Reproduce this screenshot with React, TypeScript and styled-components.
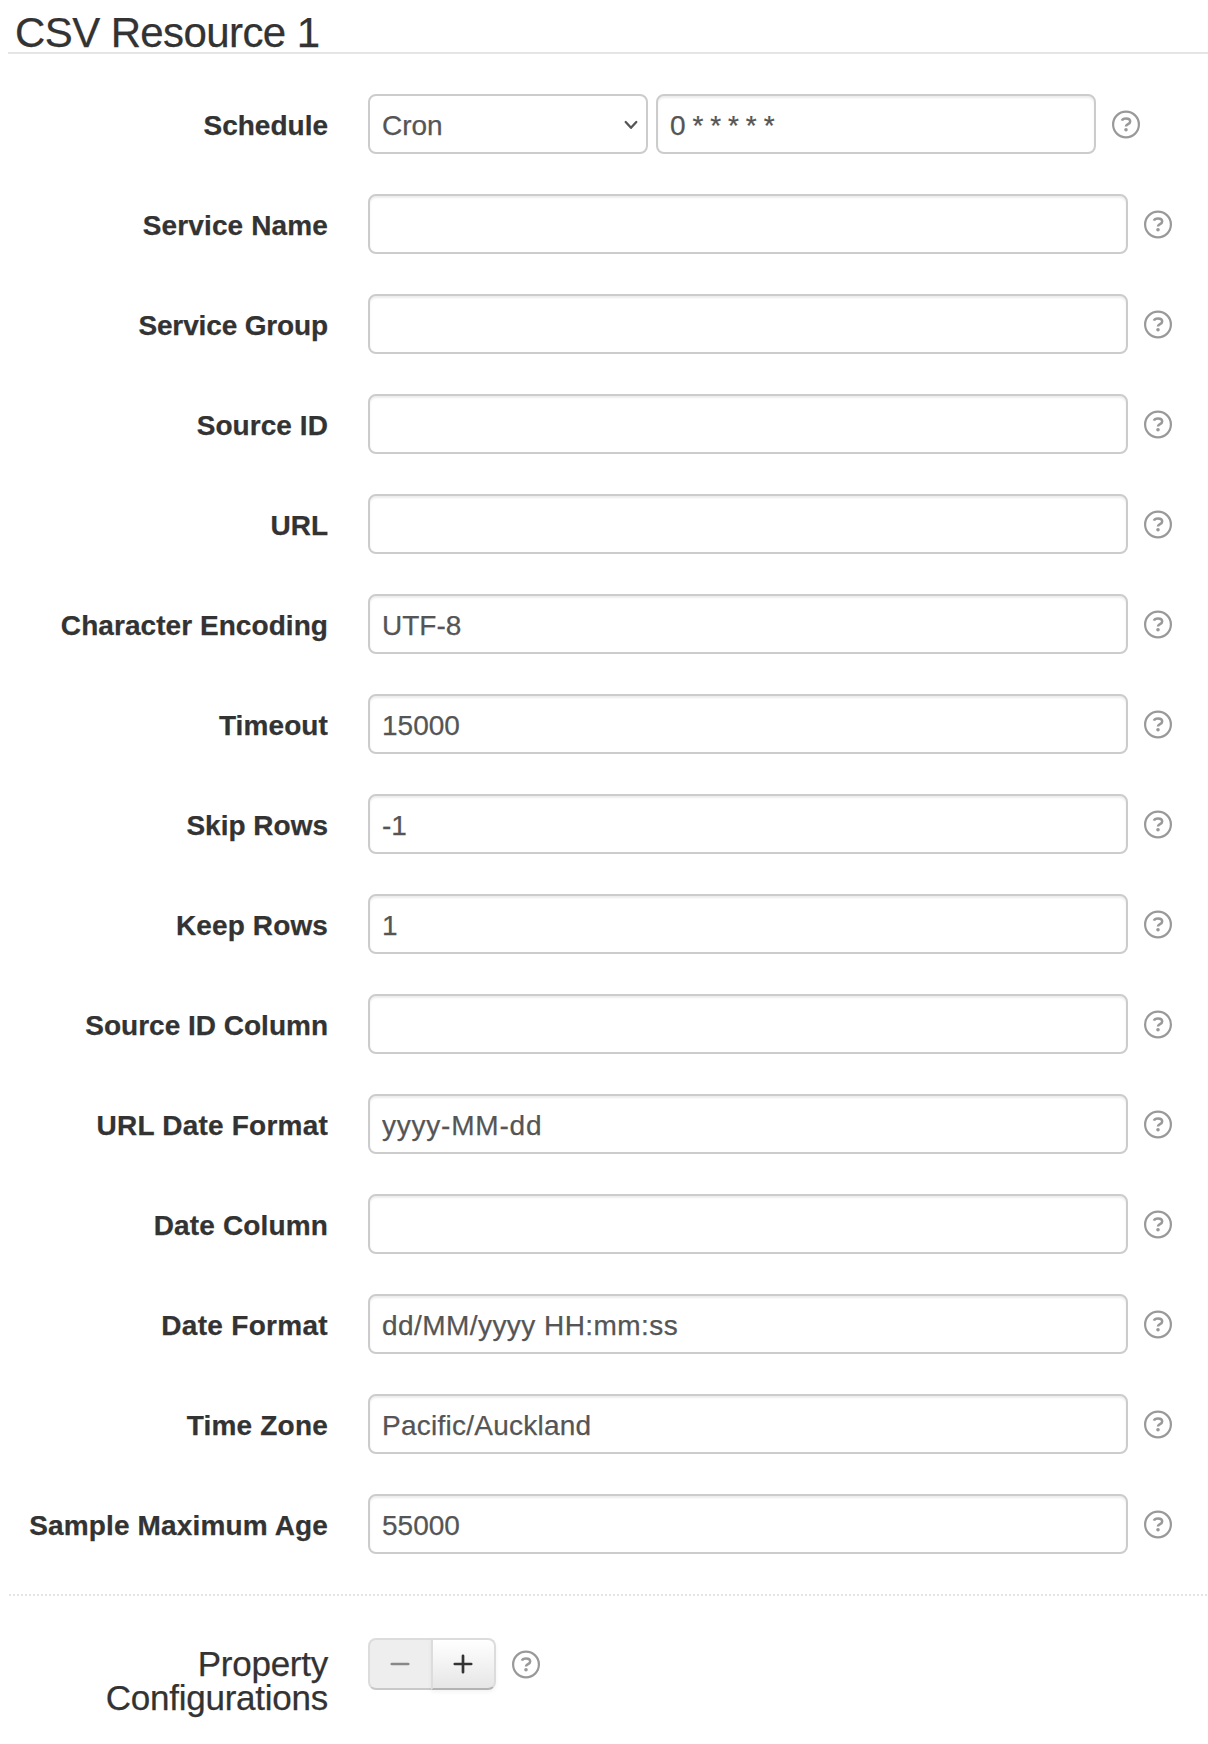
import React from "react";
import styled, { createGlobalStyle } from "styled-components";

const GlobalStyle = createGlobalStyle`
  *, *::before, *::after { box-sizing: border-box; }
  body {
    margin: 0;
    background: #fff;
    color: #333;
    font-family: "Liberation Sans", Arial, sans-serif;
    font-size: 28px;
    overflow: hidden;
    -webkit-text-stroke: 0.25px currentColor;
  }
`;

const Page = styled.main`
  height: 1744px;
  padding-left: 8px;
  overflow: hidden;
`;

const Legend = styled.h1`
  margin: 0 0 40px;
  height: 54px;
  padding: 9px 0 0 7px;
  border-bottom: 2px solid #e5e5e5;
  font-size: 42px;
  line-height: 48px;
  font-weight: 400;
  letter-spacing: -0.6px;
`;

const Rows = styled.div`
  display: flex;
  flex-direction: column;
  gap: 40px;
`;

const Row = styled.div`
  display: flex;
  align-items: center;
  height: 60px;
`;

const Label = styled.label<{ $track?: number }>`
  width: 320px;
  margin-right: 40px;
  flex: none;
  text-align: right;
  font-weight: 700;
  line-height: 40px;
  padding-top: 4px;
  white-space: nowrap;
  letter-spacing: ${(p) => p.$track ?? 0}px;
`;

const Input = styled.input<{ $width: number; $track?: number }>`
  width: ${(p) => p.$width}px;
  height: 60px;
  margin: 0;
  padding: 11px 12px 7px;
  border: 2px solid #ccc;
  border-radius: 8px;
  background: #fff;
  box-shadow: inset 0 2px 2px rgba(0, 0, 0, 0.075);
  color: #555;
  font: 28px/38px "Liberation Sans", Arial, sans-serif;
  letter-spacing: ${(p) => p.$track ?? 0}px;
  outline: none;
`;

const Select = styled.div`
  display: flex;
  align-items: center;
  justify-content: space-between;
  width: 280px;
  height: 60px;
  margin-right: 8px;
  padding: 4px 7px 0 12px;
  border: 2px solid #ccc;
  border-radius: 8px;
  color: #555;
  line-height: 40px;
`;

const Chevron = styled.svg`
  width: 16px;
  height: 12px;
  margin-bottom: 2px;
`;

const HelpIcon = styled.svg`
  flex: none;
  width: 28px;
  height: 29px;
  margin: 1px 0 0 15.5px;
`;

const Divider = styled.div`
  height: 2px;
  margin: 40px 0 42px 1px;
  background: repeating-linear-gradient(90deg, #e5e5e5 0 2px, transparent 2px 4px);
`;

const PropertyRow = styled.div`
  display: flex;
  align-items: flex-start;
`;

const PropertyTitle = styled.h2`
  width: 320px;
  margin: 9px 40px 0 0;
  text-align: right;
  font-size: 35px;
  line-height: 34px;
  font-weight: 400;
  letter-spacing: -0.25px;
`;

const Controls = styled.div`
  display: flex;
  align-items: center;
  height: 52px;
`;

const StepButton = styled.button<{ $side: "left" | "right" }>`
  display: flex;
  align-items: center;
  justify-content: center;
  width: 65px;
  height: 52px;
  margin: 0 0 0 ${(p) => (p.$side === "left" ? 0 : -2)}px;
  padding: 0 2px 0 0;
  border: 2px solid;
  border-color: ${(p) => (p.$side === "left" ? "#dcdcdc #dcdcdc #c9c9c9" : "#dcdcdc #dcdcdc #b3b3b3")};
  border-radius: ${(p) => (p.$side === "left" ? "8px 0 0 8px" : "0 8px 8px 0")};
  background: ${(p) => (p.$side === "left" ? "#eee" : "linear-gradient(#fff, #e6e6e6)")};
  box-shadow: ${(p) => (p.$side === "left" ? "none" : "0 2px 4px rgba(0, 0, 0, 0.05)")};
  color: ${(p) => (p.$side === "left" ? "#888" : "#333")};
`;

const Help = () => (
  <HelpIcon viewBox="0 0 28 29" fill="none">
    <circle cx="14" cy="14.5" r="12.9" stroke="#999" strokeWidth="2.2" />
    <path d="M9.9 10.7C10.5 8.9 12 8.4 14 8.4c2.5 0 4.2 1.1 4.2 3 0 1.6-1.2 2.2-2.4 2.9-1.1.6-1.8.9-1.8 2.1" stroke="#999" strokeWidth="2.5" />
    <circle cx="14" cy="19.8" r="1.8" fill="#999" />
  </HelpIcon>
);

type Field = { label: string; value: string; track?: number; valueTrack?: number };

const fields: Field[] = [
  { label: "Service Name", value: "", track: 0.13 },
  { label: "Service Group", value: "", track: -0.14 },
  { label: "Source ID", value: "", track: 0.07 },
  { label: "URL", value: "" },
  { label: "Character Encoding", value: "UTF-8", track: 0.06 },
  { label: "Timeout", value: "15000", track: 0.1 },
  { label: "Skip Rows", value: "-1" },
  { label: "Keep Rows", value: "1", track: 0.12 },
  { label: "Source ID Column", value: "" },
  { label: "URL Date Format", value: "yyyy-MM-dd", track: 0.22, valueTrack: 0.78 },
  { label: "Date Column", value: "", track: 0.15 },
  { label: "Date Format", value: "dd/MM/yyyy HH:mm:ss", track: 0.3, valueTrack: 0.44 },
  { label: "Time Zone", value: "Pacific/Auckland", track: 0.2, valueTrack: 0.25 },
  { label: "Sample Maximum Age", value: "55000", track: 0.15 },
];

export default function App() {
  return (
    <Page>
      <GlobalStyle />
      <Legend>CSV Resource 1</Legend>
      <Rows>
        <Row>
          <Label>Schedule</Label>
          <Select>
            Cron
            <Chevron viewBox="0 0 16 12" fill="none">
              <path d="M2.7 3l5.3 5.8L13.3 3" stroke="#555" strokeWidth="2.3" strokeLinecap="round" strokeLinejoin="round" />
            </Chevron>
          </Select>
          <Input $width={440} $track={-0.44} defaultValue="0 * * * * *" />
          <Help />
        </Row>
        {fields.map((f) => (
          <Row key={f.label}>
            <Label $track={f.track}>{f.label}</Label>
            <Input $width={760} $track={f.valueTrack} defaultValue={f.value} />
            <Help />
          </Row>
        ))}
      </Rows>
      <Divider />
      <PropertyRow>
        <PropertyTitle>Property Configurations</PropertyTitle>
        <Controls>
          <StepButton $side="left" disabled>
            <svg width="20" height="20" viewBox="0 0 20 20">
              <path d="M1.8 10h16.4" stroke="currentColor" strokeWidth="2.7" strokeLinecap="round" />
            </svg>
          </StepButton>
          <StepButton $side="right">
            <svg width="20" height="20" viewBox="0 0 20 20">
              <path d="M1.8 10h16.4M10 1.8v16.4" stroke="currentColor" strokeWidth="2.7" strokeLinecap="round" />
            </svg>
          </StepButton>
          <Help />
        </Controls>
      </PropertyRow>
    </Page>
  );
}
